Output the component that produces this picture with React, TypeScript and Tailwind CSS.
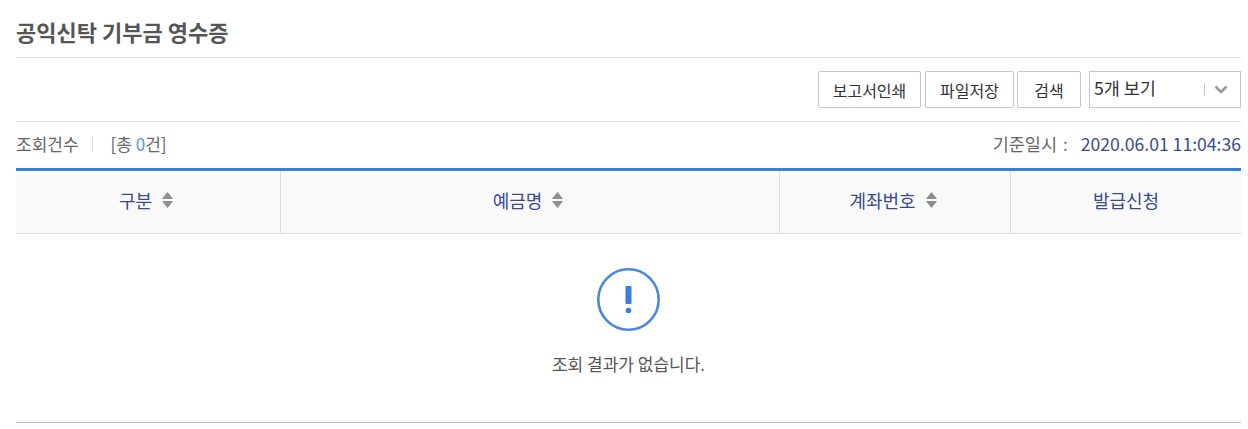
const font = "[font-family:'Noto_Sans_CJK_KR','Noto_Sans',sans-serif]";

function SortIcon() {
  return (
    <svg width="11" height="16" viewBox="0 0 11 16" className="ml-[10px] shrink-0">
      <path d="M5.5 0L10.8 6.6Q11 7 10.4 7H0.6Q0 7 0.2 6.6Z" fill="#8f8f8f" />
      <path d="M5.5 16L10.8 9.4Q11 9 10.4 9H0.6Q0 9 0.2 9.4Z" fill="#8f8f8f" />
    </svg>
  );
}

function HeadCell({ label, sort, className }: { label: string; sort?: boolean; className: string }) {
  return (
    <div className={`flex items-center justify-center pb-[4px] text-[18px] text-[#3b4a8c] ${className}`}>
      <span>{label}</span>
      {sort && <SortIcon />}
    </div>
  );
}

function Btn({ label, className }: { label: string; className: string }) {
  return (
    <button className={`h-[37px] rounded-[2px] border border-[#c3c7cf] bg-white text-[16px] text-[#333] ${className}`}>
      {label}
    </button>
  );
}

export default function App() {
  return (
    <div className={`h-[429px] w-[1248px] bg-white pl-[16px] pr-[7px] ${font}`}>
      {/* title */}
      <div className="flex h-[58px] items-center border-b border-[#dddddd] pt-[5px]">
        <h1 className="text-[22px] font-bold text-[#555555]">공익신탁 기부금 영수증</h1>
      </div>

      {/* buttons */}
      <div className="flex h-[64px] items-start justify-end border-b border-[#dddddd] pt-[13px]">
        <Btn label="보고서인쇄" className="w-[103px]" />
        <Btn label="파일저장" className="ml-[4px] w-[89px]" />
        <Btn label="검색" className="ml-[3px] w-[64px]" />
        <div className="ml-[8px] flex h-[37px] w-[152px] items-center border border-[#c3c7cf] bg-white pl-[4px] text-[17.5px] text-[#333]">
          <span className="flex-1 -translate-y-[1px]">5개 보기</span>
          <span className="h-[13px] w-px bg-[#c3c7cf]" />
          <svg width="14" height="9" viewBox="0 0 14 9" className="ml-[9px] mr-[12px]">
            <path d="M1.5 1.5L7 7L12.5 1.5" fill="none" stroke="#999999" strokeWidth="2.6" />
          </svg>
        </div>
      </div>

      {/* count row */}
      <div className="flex h-[46px] items-center justify-between pb-[2px] text-[17px] text-[#666666]">
        <div className="flex items-center">
          <span>조회건수</span>
          <span className="ml-[13px] mr-[18px] h-[16px] w-px bg-[#dddddd]" />
          <span>
            [총 <span className="text-[#5a97e6]">0</span>건]
          </span>
        </div>
        <div className="flex items-center">
          <span className="text-[17.5px]">기준일시</span>
          <span className="ml-[6px]">:</span>
          <span className="ml-[13px] text-[17.6px] text-[#3b4a8c]">2020.06.01 11:04:36</span>
        </div>
      </div>

      {/* table head */}
      <div className="flex h-[66px] border-t-[3px] border-b border-t-[#3a7fdc] border-b-[#dddddd] bg-[#f9f9f9]">
        <HeadCell label="구분" sort className="w-[265px] border-r border-[#dddddd] pr-[4px]" />
        <HeadCell label="예금명" sort className="w-[499px] border-r border-[#dddddd] pr-[4px]" />
        <HeadCell label="계좌번호" sort className="w-[231px] border-r border-[#dddddd] pr-[4px]" />
        <HeadCell label="발급신청" className="flex-1" />
      </div>

      {/* empty */}
      <div className="flex h-[189px] flex-col items-center border-b border-[#b9bcc4] pt-[33px]">
        <svg width="64" height="64" viewBox="0 0 64 64" className="-translate-x-[1px]">
          <circle cx="32.5" cy="32.5" r="30.2" fill="none" stroke="#4a88dd" strokeWidth="2.6" />
          <rect x="29.5" y="19" width="6" height="18" rx="1" fill="#3a7fdc" />
          <circle cx="32.5" cy="43.5" r="2.8" fill="#3a7fdc" />
        </svg>
        <p className="mt-[20px] text-[17px] text-[#555555]">조회 결과가 없습니다.</p>
      </div>
    </div>
  );
}
